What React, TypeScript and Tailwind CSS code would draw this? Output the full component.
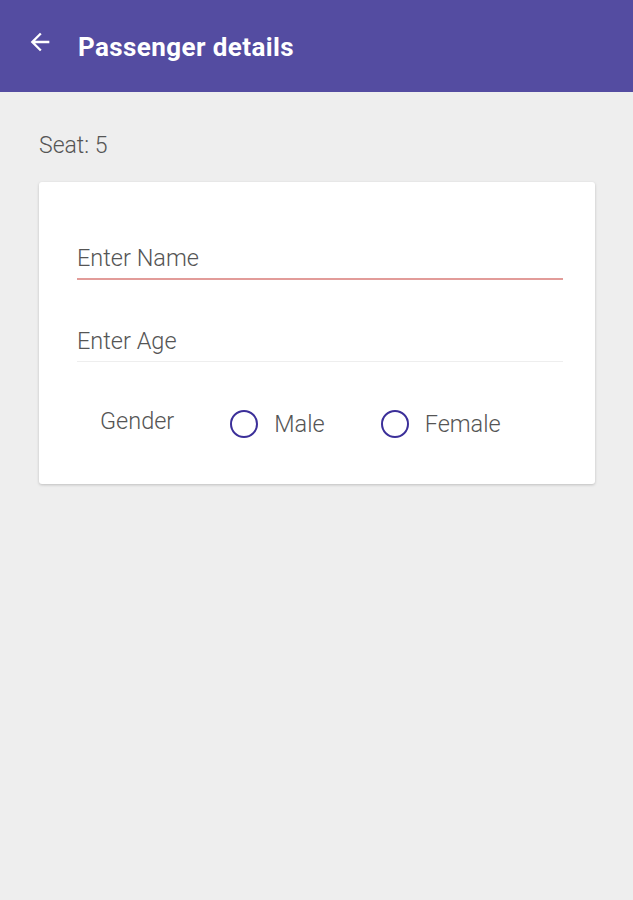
import React from 'react';

const App: React.FC = () => {
  return (
    <div className="min-h-[900px] w-full bg-[#eeeeee] font-['Roboto',sans-serif]">
      {/* App bar */}
      <header className="h-[92px] bg-[#544ca1] flex items-center pl-[26px]">
        <svg width="28" height="28" viewBox="0 0 24 24" className="mt-[-8px]">
          <path d="M20 11H7.83l5.59-5.59L12 4l-8 8 8 8 1.41-1.41L7.83 13H20v-2z" fill="#ffffff" />
        </svg>
        <h1 className="ml-[24px] mt-[2px] text-[26px] font-bold text-white tracking-[0.4px]">
          Passenger details
        </h1>
      </header>

      <main className="px-[39px] pt-[131px] relative">
        <p className="absolute left-[39px] top-[37px] text-[23px] font-light text-[#555555]">Seat: 5</p>

        {/* Card */}
        <div className="bg-white rounded-[3px] shadow-[0_1px_3px_rgba(0,0,0,0.2)] h-[302px] mt-[-41px] pl-[38px] pt-[56px] w-[556px]">
          <div className="border-b-2 border-[#e29c99] h-[42px] w-[486px] flex items-start">
            <span className="text-[23.5px] font-light text-[#555555] leading-[40px]">Enter Name</span>
          </div>
          <div className="mt-[41px] border-b border-[#eeeeee] h-[41px] w-[486px] flex items-start">
            <span className="text-[23.5px] font-light text-[#555555] leading-[40px]">Enter Age</span>
          </div>
          <div className="mt-[43px] flex items-center pl-[23px]">
            <span className="text-[23.5px] font-light text-[#555555] mt-[-4px]">Gender</span>
            <label className="flex items-center ml-[56px]">
              <span className="w-[28px] h-[28px] rounded-full border-[2.5px] border-[#3b2f99]" />
              <span className="ml-[16px] text-[23.5px] font-light text-[#555555] mt-[2px]">Male</span>
            </label>
            <label className="flex items-center ml-[56px]">
              <span className="w-[28px] h-[28px] rounded-full border-[2.5px] border-[#3b2f99]" />
              <span className="ml-[16px] text-[23.5px] font-light text-[#555555] mt-[2px]">Female</span>
            </label>
          </div>
        </div>
      </main>
    </div>
  );
};

export default App;
